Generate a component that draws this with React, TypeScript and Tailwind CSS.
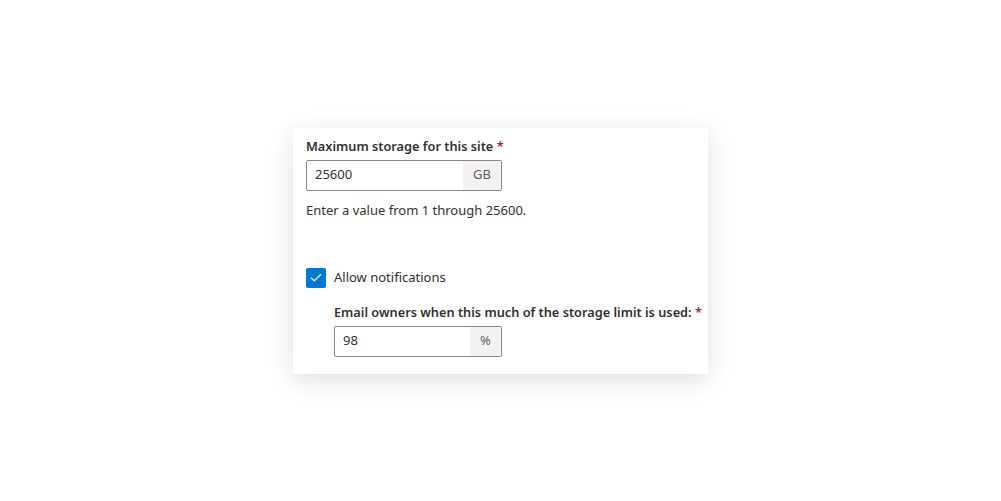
import { Check } from 'lucide-react'

function Field({ label, value, suffix, width, suffixWidth }: { label: string; value: string; suffix: string; width: string; suffixWidth: string }) {
  return (
    <div>
      <div className="text-[12.75px] leading-5 font-semibold text-[#323130] whitespace-nowrap">
        {label} <span className="text-[#a4262c]">*</span>
      </div>
      <div className={`mt-1 flex h-[31px] border border-[#8a8886] rounded-[2px] bg-white ${width}`}>
        <div className="flex-1 flex items-center pl-2 text-[13px] text-[#323130]">{value}</div>
        <div className={`flex items-center justify-center bg-[#f3f2f1] text-[13px] text-[#605e5c] ${suffixWidth}`}>{suffix}</div>
      </div>
    </div>
  )
}

export default function App() {
  return (
    <div className="h-[501px] w-full bg-white flex items-center justify-center" style={{ fontFamily: '"Noto Sans", sans-serif' }}>
      <div className="w-[415px] h-[246px] bg-white shadow-[0_6px_24px_rgba(0,0,0,0.13)] pl-[13px] pt-[8px]">
        <Field label="Maximum storage for this site" value="25600" suffix="GB" width="w-[196px]" suffixWidth="w-[38px]" />
        <p className="mt-[9px] text-[13px] leading-5 text-[#323130]">Enter a value from 1 through 25600.</p>
        <label className="mt-[48px] flex items-center gap-2 h-5">
          <span className="w-5 h-5 rounded-[2px] bg-[#0078d4] flex items-center justify-center">
            <Check className="w-3.5 h-3.5 text-white" strokeWidth={2} />
          </span>
          <span className="text-[13px] text-[#323130]">Allow notifications</span>
        </label>
        <div className="ml-7 mt-[14px]">
          <Field label="Email owners when this much of the storage limit is used:" value="98" suffix="%" width="w-[168px]" suffixWidth="w-[31px]" />
        </div>
      </div>
    </div>
  )
}
